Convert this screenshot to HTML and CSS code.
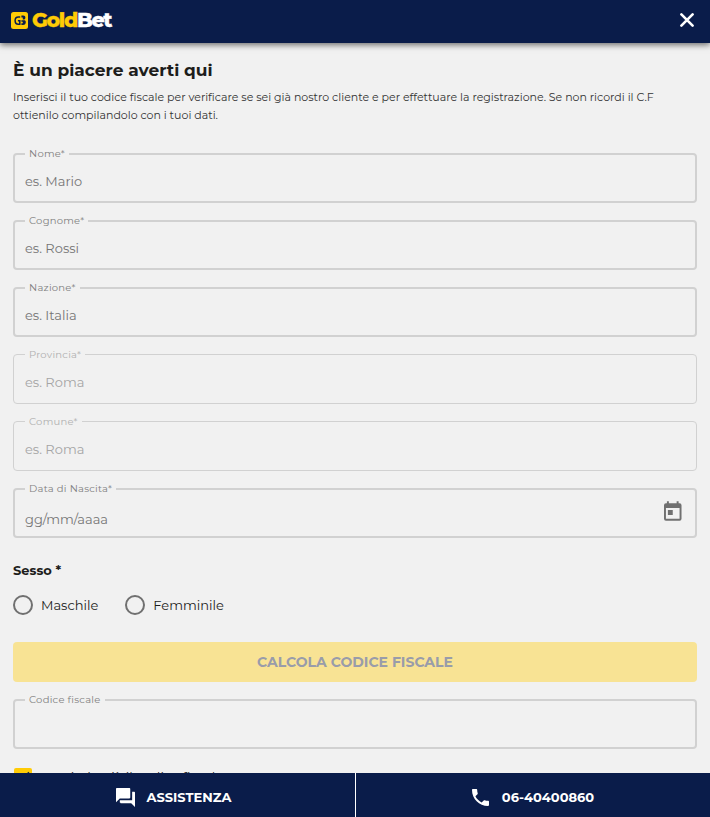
FILE: index.html
```html
<!DOCTYPE html>
<html lang="it">
<head>
    <meta charset="UTF-8">
    <meta name="viewport" content="width=device-width, initial-scale=1.0">
    <title>Registrazione - GoldBet</title>
    <link rel="stylesheet" href="styles.css">
</head>

<body>
    <header class="header">
        <div class="logo">
            <svg class="logo-mark" viewBox="0 0 17 17" width="17" height="17">
                <rect width="17" height="17" rx="2.5" fill="#ffcb05"/>
                <path d="M9.2 4.9H7.4C5.2 4.9 4.1 6.2 4.1 8.5s1.1 3.8 3.3 3.8h1.4V8.7H6.9" fill="none" stroke="#0a1c4a" stroke-width="1.5"/>
                <path d="M10.4 3.6h1.8c1.4 0 2.2.8 2.2 2.1 0 .9-.4 1.5-1 1.8h-1.6V5.6h-1.4zM10.4 8.3h3.4c.7.4 1 1 1 1.8 0 1.8-1 2.9-2.8 2.9h-1.6v-1.7h1.4V9.8h-1.4z" fill="#0a1c4a"/>
            </svg>
            <span class="logo-text"><span class="gold">Gold</span><span class="bet">Bet</span></span>
        </div>
        <button class="close" type="button" aria-label="Chiudi">
            <svg viewBox="0 0 14 14" width="14" height="14">
                <path d="M1.4 1.4l11.2 11.2M12.6 1.4L1.4 12.6" stroke="#fff" stroke-width="2.6" stroke-linecap="round"/>
            </svg>
        </button>
    </header>

    <main class="content">
        <h1>È un piacere averti qui</h1>
        <p class="intro">Inserisci il tuo codice fiscale per verificare se sei già nostro cliente e per effettuare la registrazione. Se non ricordi il C.F<br>ottienilo compilandolo con i tuoi dati.</p>

        <form id="registerForm">
            <fieldset class="field">
                <legend>Nome*</legend>
                <input type="text" name="nome" placeholder="es. Mario">
            </fieldset>
            <fieldset class="field">
                <legend>Cognome*</legend>
                <input type="text" name="cognome" placeholder="es. Rossi">
            </fieldset>
            <fieldset class="field">
                <legend>Nazione*</legend>
                <input type="text" name="nazione" placeholder="es. Italia">
            </fieldset>
            <fieldset class="field disabled" disabled>
                <legend>Provincia*</legend>
                <input type="text" name="provincia" placeholder="es. Roma">
            </fieldset>
            <fieldset class="field disabled" disabled>
                <legend>Comune*</legend>
                <input type="text" name="comune" placeholder="es. Roma">
            </fieldset>
            <fieldset class="field date">
                <legend>Data di Nascita*</legend>
                <div class="date-row">
                    <input type="text" name="data" placeholder="gg/mm/aaaa">
                    <svg viewBox="0 0 18 20" width="18" height="20">
                        <path fill="#707070" fill-rule="evenodd" d="M3 0h2v2h8V0h2v2h1a2 2 0 0 1 2 2v14a2 2 0 0 1-2 2H2a2 2 0 0 1-2-2V4a2 2 0 0 1 2-2h1zM2 7v11h14V7zM4 9h5v5H4z"/>
                    </svg>
                </div>
            </fieldset>

            <h2>Sesso *</h2>
            <div class="radios">
                <label class="radio"><input type="radio" name="sesso" value="M"><span>Maschile</span></label>
                <label class="radio"><input type="radio" name="sesso" value="F"><span>Femminile</span></label>
            </div>

            <button type="submit" class="btn" disabled>CALCOLA CODICE FISCALE</button>

            <fieldset class="field">
                <legend>Codice fiscale</legend>
                <input type="text" name="codiceFiscale">
            </fieldset>

            <label class="check">
                <span class="check-box">
                    <svg viewBox="0 0 18 18" width="18" height="18">
                        <path d="M3 9.5l4 4 8-9" fill="none" stroke="#0a1c4a" stroke-width="2"/>
                    </svg>
                </span>
                <span class="check-text">possiedo già il codice fiscale</span>
            </label>
        </form>
    </main>

    <footer class="footer">
        <a class="contact help" href="#">
            <svg viewBox="2 2 20 20" width="19" height="19">
                <path fill="#fff" d="M21 6h-2v9H6v2c0 .55.45 1 1 1h11l4 4V7c0-.55-.45-1-1-1zm-4 6V3c0-.55-.45-1-1-1H3c-.55 0-1 .45-1 1v14l4-4h10c.55 0 1-.45 1-1z"/>
            </svg>
            <span>ASSISTENZA</span>
        </a>
        <a class="contact phone" href="tel:0640400860">
            <svg viewBox="3 3 18 18" width="17" height="17">
                <path fill="#fff" d="M6.62 10.79c1.44 2.83 3.76 5.14 6.59 6.59l2.2-2.2c.27-.27.67-.36 1.02-.24 1.12.37 2.33.57 3.57.57.55 0 1 .45 1 1V20c0 .55-.45 1-1 1-9.39 0-17-7.61-17-17 0-.55.45-1 1-1h3.5c.55 0 1 .45 1 1 0 1.25.2 2.45.57 3.57.11.35.03.74-.25 1.02l-2.2 2.2z"/>
            </svg>
            <span>06-40400860</span>
        </a>
    </footer>
</body>
</html>
```
FILE: styles.css
```css
* {
    margin: 0;
    padding: 0;
    box-sizing: border-box;
}

body {
    height: 100vh;
    display: flex;
    flex-direction: column;
    overflow: hidden;
    background: #f1f1f1;
    color: #1d1d1b;
    font-family: Montserrat, Inter, "Open Sans", sans-serif;
}

.header {
    flex: none;
    height: 43px;
    padding: 0 16px 3px 11px;
    display: flex;
    align-items: center;
    justify-content: space-between;
    background: #0a1c4a;
    box-shadow: 0 2px 6px rgba(0, 0, 0, 0.55);
    z-index: 1;
}

.logo {
    display: flex;
    align-items: center;
    gap: 4px;
}

.logo-text {
    font-size: 20.5px;
    font-weight: 800;
    line-height: 20px;
    letter-spacing: -1.3px;
    -webkit-text-stroke: 0.3px;
}

.gold {
    color: #ffcb05;
}

.bet {
    color: #fff;
}

.close {
    display: flex;
    border: none;
    background: none;
}

.content {
    flex: 1;
    min-height: 0;
    overflow: hidden;
    padding: 15px 13px 0;
}

h1 {
    font-size: 17px;
    font-weight: 700;
    line-height: 24px;
    margin-bottom: 6px;
}

.intro {
    font-size: 11px;
    line-height: 18px;
    margin-bottom: 23px;
    white-space: nowrap;
    color: #333;
}

.field {
    height: 56px;
    margin-bottom: 11px;
    padding: 6px 10px 0;
    border: 2px solid #d1d1d1;
    border-radius: 4px;
}

.field legend {
    height: 14px;
    padding: 0 4px;
    font-size: 10px;
    line-height: 14px;
    letter-spacing: 0.25px;
    color: #808080;
}

.field input {
    display: block;
    width: 100%;
    height: 28px;
    border: none;
    outline: none;
    background: none;
    font-family: inherit;
    font-size: 13px;
}

.field input::placeholder {
    color: #757575;
}

.field.disabled {
    border-width: 1px;
    padding: 7px 11px 0;
}

.field.disabled legend {
    height: 13px;
    line-height: 13px;
    color: #b0b0b0;
}

.field.disabled input::placeholder {
    color: #a5a5a5;
}

.field.date {
    padding-top: 5px;
}

.date-row {
    display: flex;
    align-items: flex-start;
    padding-right: 3px;
}

.date-row input {
    margin-top: 4px;
}

h2 {
    margin-top: 22px;
    font-size: 13px;
    font-weight: 700;
    line-height: 20px;
}

.radios {
    display: flex;
    gap: 27px;
    margin: 15px 0 27px;
}

.radio {
    display: flex;
    align-items: center;
    gap: 8px;
    font-size: 13px;
    line-height: 20px;
}

.radio input {
    appearance: none;
    width: 20px;
    height: 20px;
    border: 2px solid #707070;
    border-radius: 50%;
}

.btn {
    display: block;
    width: 100%;
    height: 40px;
    margin-bottom: 11px;
    border: none;
    border-radius: 4px;
    background: #f8e394;
    color: #999caa;
    font-family: inherit;
    font-size: 14px;
    font-weight: 700;
}

.check {
    display: flex;
    align-items: flex-start;
    gap: 9px;
    padding: 8px 1px 0;
    font-size: 13px;
}

.check-box {
    width: 18px;
    height: 18px;
    border-radius: 2px;
    background: #ffcb05;
}

.check-text {
    line-height: 18px;
}

.footer {
    flex: none;
    height: 44px;
    display: flex;
    background: #0a1c4a;
}

.contact {
    width: 50%;
    display: flex;
    align-items: center;
    justify-content: center;
    padding-top: 4px;
    color: #fff;
    font-size: 13px;
    font-weight: 700;
    text-decoration: none;
}

.help {
    gap: 12px;
    padding-right: 8px;
}

.phone {
    gap: 13px;
    border-left: 1px solid #fff;
}
```
